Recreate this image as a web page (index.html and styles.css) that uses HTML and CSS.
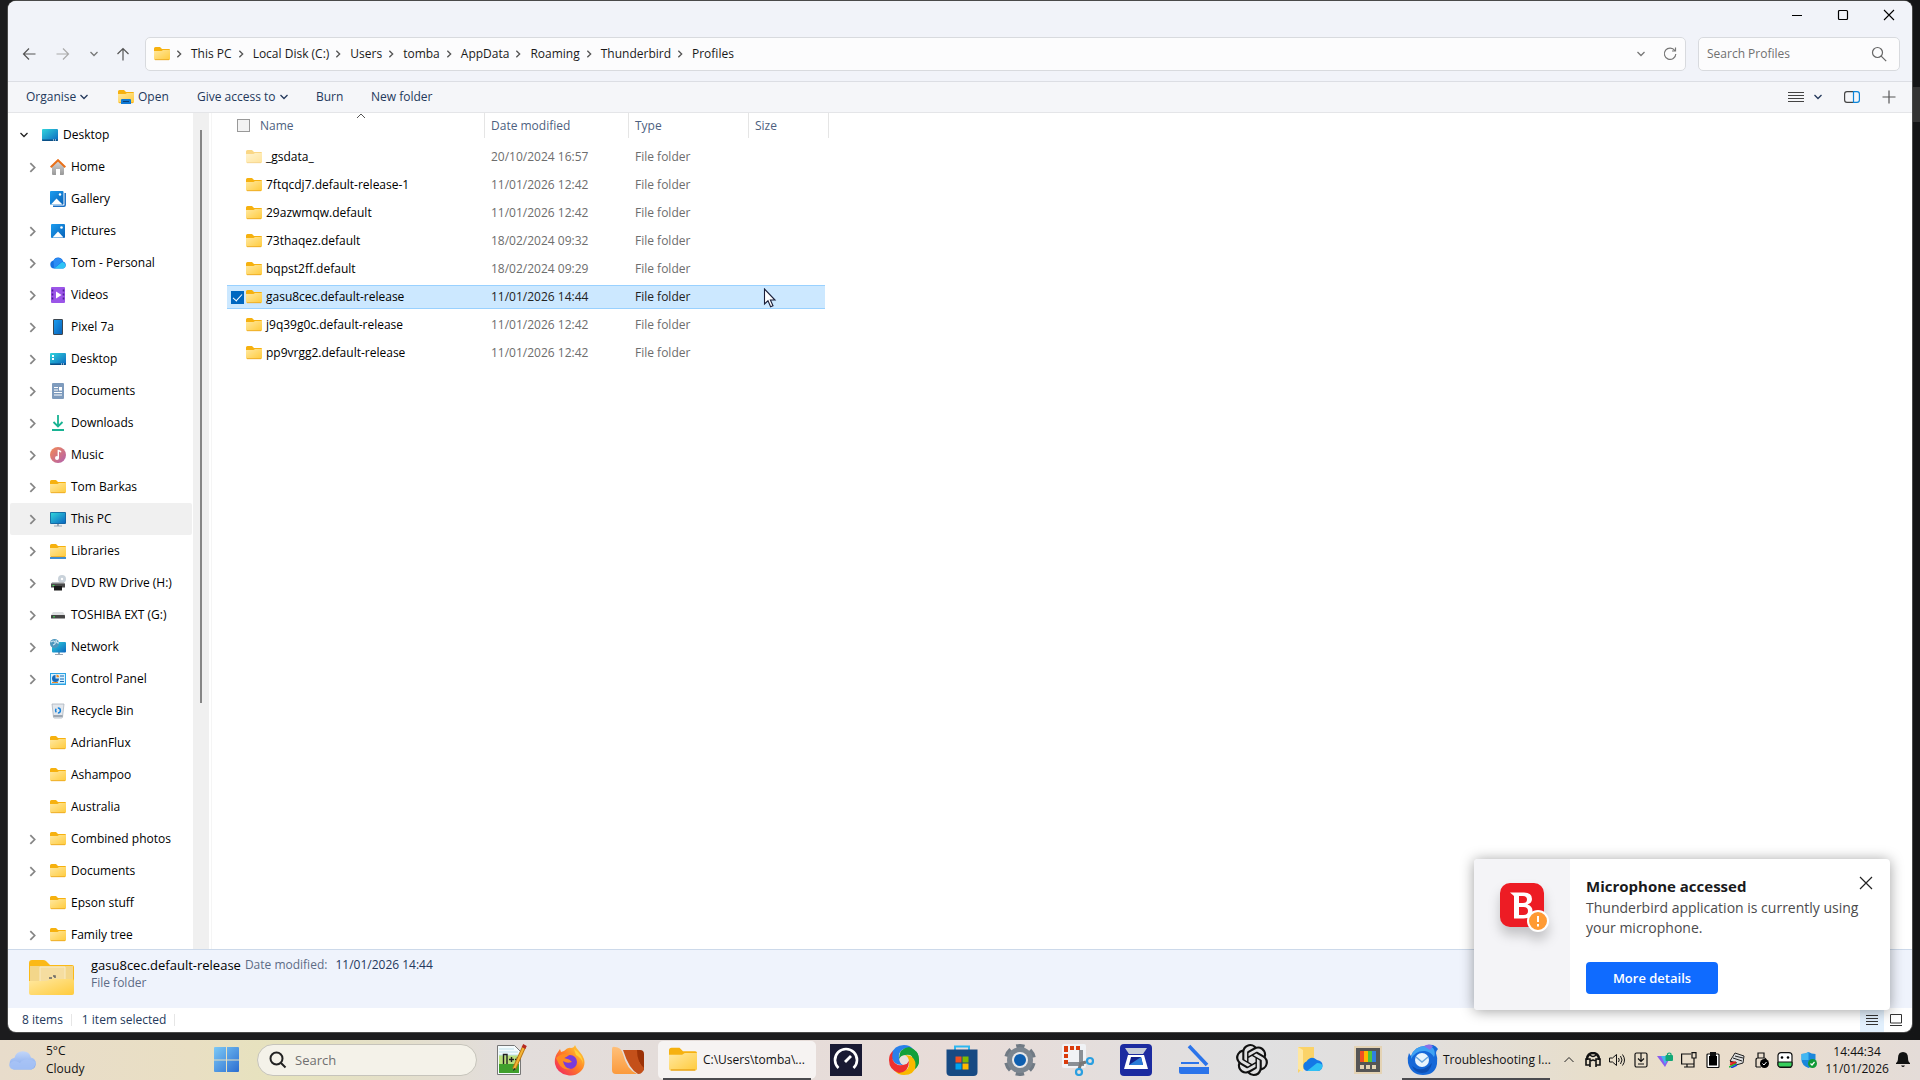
FILE: index.html
```html
<!DOCTYPE html>
<html lang="en-GB">
<head>
<meta charset="utf-8">
<meta name="viewport" content="width=device-width, initial-scale=1">
<title>Profiles - File Explorer</title>
<link rel="stylesheet" href="styles.css">
</head>
<body>
<svg class="defs" aria-hidden="true">
  <defs>
    <linearGradient id="gFolder" x1="0" y1="0" x2="1" y2="1"><stop offset="0" stop-color="#ffe8a0"/><stop offset="1" stop-color="#ffcb3c"/></linearGradient>
    <linearGradient id="gTeal" x1="0" y1="0" x2="1" y2="1"><stop offset="0" stop-color="#30d5dc"/><stop offset="1" stop-color="#0b66c0"/></linearGradient>
    <linearGradient id="gBlue" x1="0" y1="0" x2="1" y2="1"><stop offset="0" stop-color="#1c9df0"/><stop offset="1" stop-color="#0862b8"/></linearGradient>
    <linearGradient id="gWin" x1="0" y1="0" x2="1" y2="1"><stop offset="0" stop-color="#7cc9f6"/><stop offset="1" stop-color="#2b6dd0"/></linearGradient>
    <linearGradient id="gGrey" x1="0" y1="0" x2="0" y2="1"><stop offset="0" stop-color="#d8d8d8"/><stop offset="1" stop-color="#989898"/></linearGradient>
    <linearGradient id="gCloud" x1="0" y1="0" x2="0" y2="1"><stop offset="0" stop-color="#c3d6f8"/><stop offset="1" stop-color="#7fa6ee"/></linearGradient>
    <linearGradient id="gFire" x1="1" y1="0" x2="0" y2="1"><stop offset="0" stop-color="#ffe03a"/><stop offset=".5" stop-color="#ff7a25"/><stop offset="1" stop-color="#f0186c"/></linearGradient>
    <linearGradient id="gOrange" x1="0" y1="0" x2="0" y2="1"><stop offset="0" stop-color="#ffc07a"/><stop offset="1" stop-color="#fb9a3c"/></linearGradient>
    <linearGradient id="gMusic" x1="0" y1="0" x2="1" y2="1"><stop offset="0" stop-color="#f58a52"/><stop offset="1" stop-color="#b05fb0"/></linearGradient>
  </defs>
  <symbol id="chev-r" viewBox="0 0 8 12"><path d="M2 2l4 4-4 4" fill="none" stroke="currentColor" stroke-width="1.6"/></symbol>
  <symbol id="chev-d" viewBox="0 0 12 8"><path d="M2.500 2L6 5.500 9.500 2" fill="none" stroke="currentColor" stroke-width="1.300"/></symbol>
  <symbol id="folder" viewBox="0 0 16 16"><path d="M0 2.500Q0 1 1.500 1H6l2 2h7q1 0 1 1v4H0z" fill="#f6b10f"/><path d="M0 5h7.500L9 4h7v9q0 1-1 1H1q-1 0-1-1z" fill="url(#gFolder)"/><path d="M1 13.700h14" stroke="#e8a31a" stroke-width=".8"/></symbol>
  <symbol id="desktop" viewBox="0 0 16 16"><rect y="2" width="16" height="12" rx="1" fill="url(#gTeal)"/><path d="M0 12.500h16V13q0 1-1 1H1q-1 0-1-1z" fill="#0a4f86"/><path d="M11 13h1m1 0h1" stroke="#fff"/></symbol>
  <symbol id="desktop2" viewBox="0 0 16 16"><use href="#desktop"/><path d="M2 4h2v2H2zM2 7h2v2H2z" fill="#fff"/></symbol>
  <symbol id="home" viewBox="0 0 16 16"><path d="M2 7l6-5 6 5v8q0 1-1 1h-3v-6H6v6H3q-1 0-1-1z" fill="url(#gGrey)"/><path d="M.7 8.300L8 1.200l7.300 7.100" fill="none" stroke="#e8701a" stroke-width="2"/></symbol>
  <symbol id="gallery" viewBox="0 0 16 16"><path d="M3 15.200h11q1.200 0 1.200-1.200V2" fill="none" stroke="#1a6fc4" stroke-width="1.500"/><rect width="13.500" height="13.800" rx="1" fill="url(#gBlue)"/><path d="M1 13.500l5.500-6 6 6z" fill="#fff"/><circle cx="10" cy="3.500" r="1.200" fill="#fff"/></symbol>
  <symbol id="pictures" viewBox="0 0 16 16"><rect x="1" y="1" width="14" height="14" rx="1" fill="url(#gBlue)"/><path d="M2.500 14.500L8 8.500l5.500 6z" fill="#fff"/><circle cx="11.500" cy="4.500" r="1.300" fill="#fff"/></symbol>
  <symbol id="cloud" viewBox="0 0 16 16"><path d="M4 13.500a4 4 0 01-.5-7.900A5 5 0 0113 6.500a3.600 3.600 0 010 7z" fill="#1570e0"/><path d="M4 13.500l8-6.500a3.400 3.400 0 011.500 6.500z" fill="#2fc3f5"/><path d="M3.500 5.600A5 5 0 0112.500 6L4 13.500" fill="#2b8cf4"/></symbol>
  <symbol id="videos" viewBox="0 0 16 16"><rect x="1" y="0" width="14" height="16" rx="1" fill="#9b55e8"/><path d="M2.500 2.500v12M13.500 2.500v12" stroke="#4d1f96" stroke-width="1.600" stroke-dasharray="2 2"/><path d="M6 4.500v7L11.500 8z" fill="#fff"/></symbol>
  <symbol id="phone" viewBox="0 0 16 16"><rect x="3" width="10" height="16" rx="1.200" fill="#3c4650"/><rect x="4" y="1" width="8" height="14" fill="url(#gBlue)"/></symbol>
  <symbol id="doc" viewBox="0 0 16 16"><rect x="2" width="12" height="16" rx="1" fill="#7e9bbd"/><path d="M4 4.500h4M4 7h4M4 9.500h8M4 12h8" stroke="#fff"/><rect x="9" y="4" width="3" height="3.500" fill="#fff"/></symbol>
  <symbol id="down" viewBox="0 0 16 16"><path d="M8 0v11M3.500 7L8 11.500 12.500 7M2 15h12" fill="none" stroke="#19b393" stroke-width="1.800"/></symbol>
  <symbol id="music" viewBox="0 0 16 16"><circle cx="8" cy="8" r="8" fill="url(#gMusic)"/><path d="M8.300 11V3.500q2 .2 2.700 1.800" fill="none" stroke="#fff" stroke-width="1.400"/><circle cx="7" cy="11" r="2" fill="#fff"/></symbol>
  <symbol id="pc" viewBox="0 0 16 16"><path d="M7 12h2v2.500h3V15.500H4v-1h3z" fill="#98a5b3"/><rect y="1" width="16" height="12" rx="1" fill="#14629c"/><rect x=".8" y="1.800" width="14.400" height="10.400" fill="url(#gTeal)"/></symbol>
  <symbol id="library" viewBox="0 0 16 16"><use href="#folder"/><path d="M0 15h16" stroke="#1273c8" stroke-width="1.600"/></symbol>
  <symbol id="dvd" viewBox="0 0 16 16"><circle cx="12" cy="4" r="4" fill="#c9d2da"/><circle cx="12" cy="4" r="1.200" fill="#fff"/><path d="M2 7h12l1 3H1z" fill="#b9bcc0"/><rect x="1" y="8.500" width="14" height="4" fill="#4a4a4a"/><rect x="4" y="11" width="8" height="4.500" fill="#1a1a1a"/><path d="M2.500 10.500h2" stroke="#3ce052"/></symbol>
  <symbol id="drive" viewBox="0 0 16 16"><path d="M3 5h10l2 3H1z" fill="#dcdee0"/><rect x="1" y="8" width="14" height="3.500" rx=".5" fill="#444"/><path d="M3 9.800h2" stroke="#3ce052"/></symbol>
  <symbol id="network" viewBox="0 0 16 16"><path d="M8 13h2v2h3v1H5v-1h3z" fill="#98a5b3"/><rect x="2" y="3" width="14" height="10.500" rx="1" fill="url(#gTeal)"/><circle cx="4.500" cy="4.500" r="4.500" fill="#4e97bd"/><path d="M1 3q3-2 4 0t-2 3M6 1q0 3 3 3" fill="none" stroke="#cfe6f2" stroke-width="1.200"/></symbol>
  <symbol id="control" viewBox="0 0 16 16"><rect y="2" width="16" height="12" fill="#2ba3e4"/><rect x="1" y="3" width="14" height="9.500" fill="#d6f1fd"/><path d="M5.500 4v3.500H9A3.500 3.500 0 115.500 4z" fill="#1769b8"/><path d="M6.500 3.500a3 3 0 012.800 2.700H6.500z" fill="#f08a24"/><path d="M10 5h4M10 8h4M10 10.500h4" stroke="#1769b8"/><path d="M2 11.500h6" stroke="#f08a24"/></symbol>
  <symbol id="bin" viewBox="0 0 16 16"><path d="M2 1h12l-1.500 13q-.1 1-1 1h-7q-.9 0-1-1z" fill="#e3e7ec" stroke="#aab3bd" stroke-width=".8"/><path d="M3.500 13h9" stroke="#8d98a4" stroke-width="1.600"/><circle cx="8" cy="7.500" r="2.400" fill="none" stroke="#1783dc" stroke-width="1.500" stroke-dasharray="3.500 1.500"/></symbol>
  <symbol id="bird" viewBox="0 0 32 32"><path d="M2 9q1 2 2 3Q8 2 18 2q3-2 8-1 3 1 5 4-2 2-2 4 2 5 1 11-2 11-14 11T1 19q-1-5 1-10z" fill="#1668d8"/><path d="M4 12Q8 2 18 2q5-1 8 2 3 4 1 9-3-5-9-6Q9 6 4 15z" fill="#3fa2f3"/><path d="M17 2q5-3 9 0l-3 4z" fill="#8b6fe8"/><ellipse cx="15" cy="16" rx="7" ry="7" fill="#e8f4fd"/><path d="M9 13l6 5 6-5" fill="none" stroke="#6aa5dc" stroke-width="1.500"/><path d="M5 22q10 8 20-3-2 10-10 10-7 0-10-7z" fill="#0d4fb4"/></symbol>
</svg>

<div class="screen">
  <main class="window">
    <header class="titlebar">
      <button class="win-btn" aria-label="Minimise"><svg width="12" height="12"><path d="M1 6.500h10" stroke="#000"/></svg></button>
      <button class="win-btn" aria-label="Maximise"><svg width="12" height="12"><rect x="1.500" y="1.500" width="9" height="9" rx="1" fill="none" stroke="#000" stroke-width="1.200"/></svg></button>
      <button class="win-btn" aria-label="Close"><svg width="12" height="12"><path d="M1 1l10 10M11 1L1 11" stroke="#000" stroke-width="1.100"/></svg></button>
    </header>

    <div class="navbar">
      <div class="nav-btns">
        <button aria-label="Back"><svg width="14" height="14"><path d="M13.500 7H1.500M7 1.500L1.500 7 7 12.500" fill="none" stroke="#555" stroke-width="1.200"/></svg></button>
        <button class="forward" aria-label="Forward"><svg width="14" height="14"><path d="M.5 7h12M7 1.500L12.500 7 7 12.500" fill="none" stroke="#aaa" stroke-width="1.200"/></svg></button>
        <button class="recent" aria-label="Recent locations"><svg width="12" height="8"><use href="#chev-d"/></svg></button>
        <button aria-label="Up"><svg width="14" height="14"><path d="M7 13.500V1.500M1.500 7L7 1.500 12.500 7" fill="none" stroke="#555" stroke-width="1.200"/></svg></button>
      </div>
      <nav class="address" aria-label="Address">
        <svg width="16" height="16"><use href="#folder"/></svg>
        <ol class="crumbs">
          <li><svg width="8" height="10"><use href="#chev-r"/></svg><a href="#">This PC</a></li>
          <li><svg width="8" height="10"><use href="#chev-r"/></svg><a href="#">Local Disk (C:)</a></li>
          <li><svg width="8" height="10"><use href="#chev-r"/></svg><a href="#">Users</a></li>
          <li><svg width="8" height="10"><use href="#chev-r"/></svg><a href="#">tomba</a></li>
          <li><svg width="8" height="10"><use href="#chev-r"/></svg><a href="#">AppData</a></li>
          <li><svg width="8" height="10"><use href="#chev-r"/></svg><a href="#">Roaming</a></li>
          <li><svg width="8" height="10"><use href="#chev-r"/></svg><a href="#">Thunderbird</a></li>
          <li><svg width="8" height="10"><use href="#chev-r"/></svg><a href="#">Profiles</a></li>
        </ol>
        <button class="addr-btn" aria-label="Previous locations"><svg width="12" height="8"><use href="#chev-d"/></svg></button>
        <button class="addr-btn" aria-label="Refresh"><svg width="14" height="14" fill="none" stroke="#777" stroke-width="1.200"><path d="M11.800 3.500A5.700 5.700 0 1012.800 7M12.500.5v3.500H9"/></svg></button>
      </nav>
      <label class="search">
        <input type="search" placeholder="Search Profiles" aria-label="Search Profiles">
        <svg width="16" height="16" fill="none" stroke="#666" stroke-width="1.200"><circle cx="6.500" cy="6.500" r="5"/><path d="M10.200 10.200l5 5"/></svg>
      </label>
    </div>

    <div class="toolbar">
      <button class="t-organise">Organise <svg width="12" height="8"><use href="#chev-d"/></svg></button>
      <button class="t-open"><svg width="16" height="16"><use href="#folder"/><path d="M3 15v-4q0-1 1-1h8q1 0 1 1v4z" fill="#0f78d4"/><path d="M5 12.500h6" stroke="#083e78"/></svg>Open</button>
      <button class="t-access">Give access to <svg width="12" height="8"><use href="#chev-d"/></svg></button>
      <button class="t-burn">Burn</button>
      <button>New folder</button>
      <div class="tool-right">
        <button aria-label="Change view"><svg width="16" height="12"><path d="M0 1.500h16M0 4.500h16M0 7.500h16M0 10.500h16" stroke="#444"/></svg></button>
        <button class="more-view" aria-label="More view options"><svg width="12" height="8"><use href="#chev-d"/></svg></button>
        <button class="pane-btn" aria-label="Preview pane"><svg width="16" height="12" fill="none" stroke-width="1.200"><path d="M9.500.6H3Q.6.600.6 3v6Q.6 11.400 3 11.400h6.500" stroke="#444"/><path d="M9.500.6H13q2.400 0 2.400 2.400v6q0 2.400-2.400 2.400H9.500z" stroke="#0b84d8"/></svg></button>
        <button aria-label="Add"><svg width="14" height="14"><path d="M7 .5v13M.5 7h13" stroke="#555" stroke-width="1.200"/></svg></button>
      </div>
    </div>

    <div class="content">
      <aside class="sidebar">
        <ul class="tree">
          <li class="root"><svg class="tw" width="12" height="8"><use href="#chev-d"/></svg><svg class="ic"><use href="#desktop"/></svg><span>Desktop</span></li>
          <li><svg class="tw"><use href="#chev-r"/></svg><svg class="ic"><use href="#home"/></svg><span>Home</span></li>
          <li><i class="tw"></i><svg class="ic"><use href="#gallery"/></svg><span>Gallery</span></li>
          <li><svg class="tw"><use href="#chev-r"/></svg><svg class="ic"><use href="#pictures"/></svg><span>Pictures</span></li>
          <li><svg class="tw"><use href="#chev-r"/></svg><svg class="ic"><use href="#cloud"/></svg><span>Tom - Personal</span></li>
          <li><svg class="tw"><use href="#chev-r"/></svg><svg class="ic"><use href="#videos"/></svg><span>Videos</span></li>
          <li><svg class="tw"><use href="#chev-r"/></svg><svg class="ic"><use href="#phone"/></svg><span>Pixel 7a</span></li>
          <li><svg class="tw"><use href="#chev-r"/></svg><svg class="ic"><use href="#desktop2"/></svg><span>Desktop</span></li>
          <li><svg class="tw"><use href="#chev-r"/></svg><svg class="ic"><use href="#doc"/></svg><span>Documents</span></li>
          <li><svg class="tw"><use href="#chev-r"/></svg><svg class="ic"><use href="#down"/></svg><span>Downloads</span></li>
          <li><svg class="tw"><use href="#chev-r"/></svg><svg class="ic"><use href="#music"/></svg><span>Music</span></li>
          <li><svg class="tw"><use href="#chev-r"/></svg><svg class="ic"><use href="#folder"/></svg><span>Tom Barkas</span></li>
          <li class="current"><svg class="tw"><use href="#chev-r"/></svg><svg class="ic"><use href="#pc"/></svg><span>This PC</span></li>
          <li><svg class="tw"><use href="#chev-r"/></svg><svg class="ic"><use href="#library"/></svg><span>Libraries</span></li>
          <li><svg class="tw"><use href="#chev-r"/></svg><svg class="ic"><use href="#dvd"/></svg><span>DVD RW Drive (H:)</span></li>
          <li><svg class="tw"><use href="#chev-r"/></svg><svg class="ic"><use href="#drive"/></svg><span>TOSHIBA EXT (G:)</span></li>
          <li><svg class="tw"><use href="#chev-r"/></svg><svg class="ic"><use href="#network"/></svg><span>Network</span></li>
          <li><svg class="tw"><use href="#chev-r"/></svg><svg class="ic"><use href="#control"/></svg><span>Control Panel</span></li>
          <li><i class="tw"></i><svg class="ic"><use href="#bin"/></svg><span>Recycle Bin</span></li>
          <li><i class="tw"></i><svg class="ic"><use href="#folder"/></svg><span>AdrianFlux</span></li>
          <li><i class="tw"></i><svg class="ic"><use href="#folder"/></svg><span>Ashampoo</span></li>
          <li><i class="tw"></i><svg class="ic"><use href="#folder"/></svg><span>Australia</span></li>
          <li><svg class="tw"><use href="#chev-r"/></svg><svg class="ic"><use href="#folder"/></svg><span>Combined photos</span></li>
          <li><svg class="tw"><use href="#chev-r"/></svg><svg class="ic"><use href="#folder"/></svg><span>Documents</span></li>
          <li><i class="tw"></i><svg class="ic"><use href="#folder"/></svg><span>Epson stuff</span></li>
          <li><svg class="tw"><use href="#chev-r"/></svg><svg class="ic"><use href="#folder"/></svg><span>Family tree</span></li>
        </ul>
        <div class="scrollbar"><div class="thumb"></div></div>
      </aside>

      <section class="files">
        <table>
          <colgroup><col class="c-name"><col class="c-date"><col class="c-type"><col class="c-size"></colgroup>
          <thead>
            <tr>
              <th class="th-name"><div><input type="checkbox" aria-label="Select all"><span>Name</span><svg class="sort" width="10" height="6"><path d="M1 5l4-4 4 4" fill="none" stroke="#555"/></svg></div></th>
              <th><div>Date modified</div></th><th><div>Type</div></th><th><div>Size</div></th>
            </tr>
          </thead>
          <tbody>
            <tr class="hidden-item"><td><div class="fname"><svg class="ic"><use href="#folder"/></svg>_gsdata_</div></td><td>20/10/2024 16:57</td><td>File folder</td><td></td></tr>
            <tr><td><div class="fname"><svg class="ic"><use href="#folder"/></svg>7ftqcdj7.default-release-1</div></td><td>11/01/2026 12:42</td><td>File folder</td><td></td></tr>
            <tr><td><div class="fname"><svg class="ic"><use href="#folder"/></svg>29azwmqw.default</div></td><td>11/01/2026 12:42</td><td>File folder</td><td></td></tr>
            <tr><td><div class="fname"><svg class="ic"><use href="#folder"/></svg>73thaqez.default</div></td><td>18/02/2024 09:32</td><td>File folder</td><td></td></tr>
            <tr><td><div class="fname"><svg class="ic"><use href="#folder"/></svg>bqpst2ff.default</div></td><td>18/02/2024 09:29</td><td>File folder</td><td></td></tr>
            <tr class="selected"><td><div class="fname"><input type="checkbox" checked aria-label="gasu8cec.default-release"><svg class="ic"><use href="#folder"/></svg>gasu8cec.default-release</div></td><td>11/01/2026 14:44</td><td>File folder</td><td></td></tr>
            <tr><td><div class="fname"><svg class="ic"><use href="#folder"/></svg>j9q39g0c.default-release</div></td><td>11/01/2026 12:42</td><td>File folder</td><td></td></tr>
            <tr><td><div class="fname"><svg class="ic"><use href="#folder"/></svg>pp9vrgg2.default-release</div></td><td>11/01/2026 12:42</td><td>File folder</td><td></td></tr>
          </tbody>
        </table>
        <svg class="cursor" width="14" height="20"><path d="M1.500 1v15l3.500-3.200 2.600 6 2.400-1-2.600-5.800H12z" fill="#fff" stroke="#1b1f3a" stroke-width="1.100"/></svg>
      </section>
    </div>

    <section class="details">
      <svg width="45" height="36" viewBox="0 0 45 36"><path d="M0 3q0-3 3-3h11q2 0 3 1l4 4h22q2 0 2 2v14H0z" fill="#fbb917"/><rect x="1" y="6" width="43" height="20" fill="#f3d68a"/><path d="M11 7h25v15H11z" fill="#f5dda0" stroke="#f9ebc4"/><path d="M20 18h3m1-2h2v2" fill="none" stroke="#666" stroke-width="1.500"/><path d="M0 21h16q3 0 6-2h21q2 0 2 2v12q0 2-2 2H2q-2 0-2-2z" fill="url(#gFolder)"/></svg>
      <div class="d-text">
        <div class="d-line"><strong>gasu8cec.default-release</strong><span>Date modified:</span><em>11/01/2026 14:44</em></div>
        <div>File folder</div>
      </div>
    </section>

    <footer class="status">
      <span>8 items</span><span>1 item selected</span>
      <div class="views">
        <button class="on" aria-label="Details view"><svg width="12" height="12"><path d="M0 1.500h12M0 4.500h12M0 7.500h12M0 10.500h12" stroke="#333"/></svg></button>
        <button aria-label="Large icons view"><svg width="12" height="12"><path d="M.5.5h11v8.500H.5zM0 11.500h12" fill="none" stroke="#333"/></svg></button>
      </div>
    </footer>
  </main>

  <footer class="taskbar">
    <button class="weather"><svg width="30" height="20"><path d="M6 19.500a6 6 0 01.5-11.700A8.500 8.500 0 0123 7.500a6.200 6.200 0 01.5 12z" fill="url(#gCloud)"/><path d="M1 15q4-7 11-2 5-7 16-1-2 8-6 7.500H6q-4 0-5-4.500z" fill="#a9c4f6" opacity=".8"/></svg><span>5°C<br>Cloudy</span></button>
    <button class="start" aria-label="Start"><svg width="26" height="26"><path d="M0 1q0-1 1-1h11v12.500H0zM13 0h11q1 0 1 1v11.500H13zM0 13.500h12V25H1q-1 0-1-1zM13 13.500h12V24q0 1-1 1H13z" fill="url(#gWin)"/></svg></button>
    <label class="tb-search"><svg width="18" height="18" fill="none" stroke="#222" stroke-width="2"><circle cx="7.500" cy="7.500" r="6"/><path d="M12 12l4.500 4.500"/></svg><input type="search" placeholder="Search" aria-label="Search"></label>
    <div class="apps">
      <button aria-label="Notepad++"><svg width="32" height="32"><path d="M1.500 1.500h17l6 6v23h-23z" fill="#f4fbfd" stroke="#777"/><path d="M3 11h20v18H3z" fill="#b9e07c"/><path d="M3 20h20v9H3z" fill="#3f9f2c"/><path d="M3 5h15M3 8h19M3 11h19" stroke="#bfe0ea"/><path d="M7.500 20V10.500H11V20M13 15.500h5M15.500 13v5M19 15.500h5M21.500 13v5" fill="none" stroke="#222" stroke-width="1.400"/><path d="M28 3L18 25" stroke="#b87410" stroke-width="4"/><path d="M28 3L18 25" stroke="#f4b436" stroke-width="2"/><path d="M27.500 4l1.500-3" stroke="#b52a22" stroke-width="4"/><path d="M17 27l3-2-2-1z" fill="#222"/></svg></button>
      <button aria-label="Firefox"><svg width="32" height="32"><path d="M21 1q1 3 4 6t5 8q2 8-4 13t-13 3Q3 29 1 20q-1-7 3-12l2-3 1 3 3-1q4-4 7-3 3 0 4-3z" fill="url(#gFire)"/><circle cx="16" cy="18" r="7" fill="#7a3bdb"/><path d="M2 14Q8 8 15 11q-2 2-5 3 6 1 8 4-5 2-9-1 1 7 8 8-8 2-12-5z" fill="#ff8a22"/><path d="M20 5q9 6 9 15-1-6-7-9z" fill="#ffd23a"/></svg></button>
      <button aria-label="Files"><svg width="32" height="32"><path d="M10 6h18q4 0 4 4v17L20 6z" fill="#9c3206"/><path d="M11 6h14q0 12 7 18-1 6-6 6-9-5-15-24z" fill="#c4501a"/><path d="M0 5q0-3 3-2 6 0 8 7 4 16 14 20H4q-4 0-4-4z" fill="url(#gOrange)"/></svg></button>
      <button class="task active"><svg width="28" height="28" viewBox="0 1 16 14"><use href="#folder" width="16" height="16"/></svg><span>C:\Users\tomba\...</span></button>
      <button aria-label="Speedtest"><svg width="32" height="32"><rect width="32" height="32" fill="#191a33"/><path d="M8.500 24a11 11 0 1115 0" fill="none" stroke="#fff" stroke-width="2.600"/><path d="M15 18l6-6" stroke="#fff" stroke-width="2.800"/></svg></button>
      <button aria-label="ShareX"><svg width="32" height="32"><path d="M3 11Q6 1 16 1q6 0 9 4-11-3-14 5-1 7 4 11Q4 21 3 11z" fill="#2a80ea"/><path d="M21 3q10 3 10 13 0 6-4 9 3-11-5-14-7-1-11 4Q11 4 21 3z" fill="#12a03a"/><path d="M29 21q-3 10-13 10-6 0-9-4 11 3 14-5 1-7-4-11 11 0 12 10z" fill="#f9b800"/><path d="M11 29Q1 26 1 16q0-6 4-9-3 11 5 14 7 1 11-4 0 11-10 12z" fill="#ee3030"/><path d="M22 4q9 3 9 12 0 6-4 9 2-8-3-12z" fill="#12a03a"/><circle cx="16" cy="16" r="4.500" fill="#e6e0de"/></svg></button>
      <button aria-label="Microsoft Store"><svg width="32" height="32"><path d="M9 8V2.500h14V8" fill="none" stroke="#2cb6f0" stroke-width="2"/><path d="M.5 5.500h31V28q0 4-4 4h-23q-4 0-4-4z" fill="#174a83"/><path d="M9.500 12.500h6v6h-6z" fill="#f25022"/><path d="M16.500 12.500h6v6h-6z" fill="#7fba00"/><path d="M9.500 19.500h6v6h-6z" fill="#00a4ef"/><path d="M16.500 19.500h6v6h-6z" fill="#ffb900"/></svg></button>
      <button aria-label="Settings"><svg width="32" height="32"><circle cx="16" cy="16" r="13.500" fill="none" stroke="#707a84" stroke-width="5" stroke-dasharray="8 6.140" transform="rotate(13 16 16)"/><circle cx="16" cy="16" r="9.500" fill="none" stroke="#7b858f" stroke-width="7"/><circle cx="16" cy="16" r="8" fill="#e8e8ea"/><circle cx="16" cy="16" r="6" fill="#0e5fb0"/></svg></button>
      <button aria-label="Snipping Tool"><svg width="32" height="32"><rect width="24" height="24" rx="2" fill="#f0f2f5"/><path d="M2 4h18M4 4v16" fill="none" stroke="#da3b0a" stroke-width="4" stroke-dasharray="4 2"/><path d="M19 6v13M6 20h16" stroke="#8a8f95" stroke-width="4"/><path d="M17 20l7-2M19 19l-2 6" stroke="#777" stroke-width="3"/><circle cx="28" cy="17" r="3" fill="none" stroke="#2a9fe0" stroke-width="2.200"/><circle cx="17" cy="28" r="3" fill="none" stroke="#2a9fe0" stroke-width="2.200"/></svg></button>
      <button aria-label="Scan utility"><svg width="32" height="32"><rect width="32" height="32" rx="4" fill="#1c2ba0"/><path d="M5 4h22l-4 6H9z" fill="#c7cdd8"/><path d="M8 11h16l4 14H4z" fill="#fff"/><path d="M11 13h10l2 8H9z" fill="#12218c"/><path d="M9 21l12-8 2 8z" fill="#2b7cd8"/></svg></button>
      <button aria-label="Scan"><svg width="32" height="32"><path d="M11 2l18 19" stroke="#2b74ea" stroke-width="3.600"/><path d="M3 19h18" stroke="#2b74ea" stroke-width="2"/><path d="M1 23h30v7H3q-2 0-2-2z" fill="#2b74ea"/></svg></button>
      <button aria-label="ChatGPT"><svg width="32" height="32" viewBox="0 0 24 24"><path fill="#111" d="M22.280 9.820a5.980 5.980 0 0 0-.52-4.910 6.050 6.050 0 0 0-6.510-2.900A6.070 6.070 0 0 0 4.980 4.180a5.980 5.980 0 0 0-4 2.900 6.050 6.050 0 0 0 .75 7.100 5.980 5.980 0 0 0 .51 4.910 6.050 6.050 0 0 0 6.510 2.900A5.980 5.980 0 0 0 13.260 24a6.060 6.060 0 0 0 5.770-4.210 5.990 5.990 0 0 0 4-2.900 6.060 6.060 0 0 0-.75-7.070zm-9.020 12.610a4.480 4.480 0 0 1-2.880-1.040l.14-.08 4.780-2.760a.8.8 0 0 0 .39-.68v-6.740l2.020 1.170.04.05v5.580a4.500 4.500 0 0 1-4.490 4.500zM3.600 18.300a4.470 4.470 0 0 1-.54-3.010l.14.090 4.790 2.760a.77.77 0 0 0 .78 0l5.840-3.370v2.330l-.03.060-4.840 2.790A4.500 4.500 0 0 1 3.600 18.300zM2.340 7.900a4.490 4.490 0 0 1 2.370-1.980v5.680a.77.77 0 0 0 .38.680l5.820 3.350-2.020 1.170h-.07l-4.830-2.790A4.500 4.500 0 0 1 2.340 7.870zm16.600 3.860L13.100 8.360l2.020-1.160h.07l4.830 2.790a4.490 4.490 0 0 1-.68 8.100v-5.670a.79.79 0 0 0-.4-.66zm2.010-3.030l-.14-.09-4.780-2.780a.78.78 0 0 0-.78 0L9.410 9.230V6.900l.03-.06 4.830-2.790a4.500 4.500 0 0 1 6.680 4.660zM8.310 12.860L6.290 11.700l-.04-.06V6.070a4.500 4.500 0 0 1 7.370-3.450l-.14.080L8.700 5.460a.8.8 0 0 0-.39.680zm1.100-2.360l2.600-1.500 2.600 1.500v3l-2.600 1.500-2.600-1.500z"/></svg></button>
      <button aria-label="OneDrive folder"><svg width="32" height="32"><path d="M4 3h16v22H8l-4 4z" fill="#fbd368"/><path d="M4 3l5 3v22l-5-3z" fill="#ffe79f"/><path d="M13 27a5 5 0 01-.5-9.500Q17 11 23 16q6 1 5.500 6-.5 5-5.500 5z" fill="#1478e6"/><path d="M13 27l10-8q5 0 5.500 3-.5 5-5.500 5z" fill="#2fc0f4"/></svg></button>
      <button aria-label="PowerToys"><svg width="32" height="32"><rect x="2" y="2" width="28" height="28" fill="#e4d3b4"/><rect x="4" y="4" width="24" height="24" fill="#555"/><path d="M8 7h4v11H8z" fill="#f25022"/><path d="M12 7h4v11h-4z" fill="#ffb900"/><path d="M16 7h4v11h-4z" fill="#4fc63d"/><path d="M20 7h4v11h-4z" fill="#2f7fe0"/><path d="M8 21h4v4H8zM14 21h4v4h-4zM20 21h4v4h-4z" fill="#e4d3b4"/></svg></button>
      <button class="task bird"><svg width="32" height="32"><use href="#bird"/></svg><span>Troubleshooting I...</span></button>
    </div>
    <div class="tray">
      <button aria-label="Show hidden icons"><svg width="16" height="16"><path d="M3.500 10L8 5.500l4.500 4.500" fill="none" stroke="#222"/></svg></button>
      <button aria-label="Headset"><svg width="16" height="16"><path d="M2 8V7a6 6 0 0112 0v1" fill="none" stroke="#111" stroke-width="2.500"/><path d="M5 3q3 3 6 0M1 7h4v6H1zM11 7h4v6h-4zM6 9q2-2 4 0M5 13v2M11 13v2" fill="none" stroke="#111" stroke-width="1.600"/></svg></button>
      <button aria-label="Volume"><svg width="16" height="16" fill="none" stroke="#111"><path d="M.5 6h3l4-3.500v11l-4-3.500h-3zM9.500 6q1.500 2 0 4M11.500 4q3 4 0 8M13.500 2.500q4 5.500 0 11"/></svg></button>
      <button aria-label="Updates"><svg width="16" height="16" fill="none" stroke="#111" stroke-width="1.200"><rect x="2" y="1" width="12" height="14" rx="1.500"/><path d="M8 1v8M5 6.500L8 9.500l3-3M5 12h6"/></svg></button>
      <button aria-label="VPN"><svg width="16" height="16"><path d="M0 4h14L8 15z" fill="#8a5cf0"/><path d="M4 4h9l-5 8z" fill="#44b7e8"/><rect x="8.500" y="3" width="7.500" height="6" rx="1" fill="#12a877"/><path d="M10.500 3.500V2q1.800-2 3.500 0v1.500" fill="none" stroke="#12a877" stroke-width="1.200"/></svg></button>
      <button aria-label="Network"><svg width="16" height="16" fill="none" stroke="#111" stroke-width="1.200"><path d="M10 2H.6v10H13V7M6 12v3M3 15h7M11 .6h4V6h-4zM13 6v9h-3"/></svg></button>
      <button aria-label="Clipboard"><svg width="16" height="16"><rect x="2" y="2" width="12" height="13.500" rx="1" fill="#fff" stroke="#111" stroke-width="1.200"/><rect x="4" y="4" width="8" height="9.500" fill="#000"/><rect x="5" y="0" width="6" height="4" fill="#111"/></svg></button>
      <button aria-label="Printer"><svg width="16" height="16"><path d="M1 9l5-8 9 3-1 7-7 2z" fill="#ddd" stroke="#222"/><path d="M4 6l9 3M6 4l8 2M1 9l7 2" stroke="#222"/><path d="M1 11l6-1M1 13l6-2" stroke="#e02020" stroke-width="1.500"/><path d="M0 15l7-3" stroke="#18b838" stroke-width="1.500"/><path d="M2 16l6-3" stroke="#1a3de0" stroke-width="1.500"/></svg></button>
      <button aria-label="Safely remove hardware"><svg width="16" height="16"><path d="M5 6V1h6v5M3 15V8q0-2 2-2h6q2 0 2 2" fill="none" stroke="#111" stroke-width="1.200"/><path d="M3 15h5" stroke="#111"/><circle cx="11.500" cy="11.500" r="4.500" fill="#000"/><path d="M9.500 11.500l1.500 1.500 2.500-3" fill="none" stroke="#fff"/></svg></button>
      <button aria-label="Password manager"><svg width="16" height="16"><rect x="1" y=".6" width="14" height="14.800" rx="3" fill="#fff" stroke="#111" stroke-width="1.200"/><circle cx="5" cy="5.500" r="1.300"/><circle cx="11" cy="5.500" r="1.300"/><path d="M1 10h14v3q0 2-2 2H3q-2 0-2-2z" fill="#37cf5c" stroke="#111"/></svg></button>
      <button aria-label="Windows Security"><svg width="16" height="16"><path d="M7.500 0q3 2 7 2v6q0 5-7 8-7-3-7-8V2q4 0 7-2z" fill="#1b87dc"/><path d="M7.500 0v8H.5V2q4 0 7-2z" fill="#42b7f2"/><circle cx="11.500" cy="11.500" r="4.500" fill="#119a37"/><path d="M9.500 11.500l1.500 1.500 2.500-3" fill="none" stroke="#fff" stroke-width="1.200"/></svg></button>
    </div>
    <button class="clock">14:44:34<br>11/01/2026</button>
    <button class="bell" aria-label="Notifications"><svg width="16" height="18"><path d="M8 1q5 0 5 6 0 4 2 5v1H1v-1q2-1 2-5 0-6 5-6zM6 14.500h4q-2 3-4 0z" fill="#111"/></svg></button>
  </footer>

  <aside class="toast" role="alert">
    <div class="toast-side"><svg width="52" height="68"><rect x="2" width="44" height="44" rx="10" fill="#ed1c24"/><path d="M12 9.500h14q8 0 8 6.500 0 4-4.500 5.500 5 1.500 5 6.500 0 7.500-9 7.500H16V13zM21 13v7h4q4 0 4-3.500T25 13zM21 24v8h4.500q4.500 0 4.500-4t-4.500-4z" fill="#fff" fill-rule="evenodd"/><circle cx="40" cy="38" r="10" fill="#ff9a33" stroke="#fff" stroke-width="2"/><path d="M40 33v6M40 41v2.500" stroke="#fff" stroke-width="2"/></svg></div>
    <div class="toast-body">
      <h2>Microphone accessed</h2>
      <p>Thunderbird application is currently using your microphone.</p>
      <button class="more">More details</button>
    </div>
    <button class="toast-close" aria-label="Close notification"><svg width="14" height="14"><path d="M1 1l12 12M13 1L1 13" stroke="#222" stroke-width="1.200"/></svg></button>
  </aside>
</div>
</body>
</html>
```
FILE: styles.css
```css
* { box-sizing: border-box; }

body {
  margin: 0;
  font: 12px/16px "Open Sans", "Noto Sans", sans-serif;
  color: #000;
  background: #1c1c1e;
}

button {
  font: inherit;
  color: inherit;
  background: none;
  border: 0;
  padding: 0;
  display: flex;
  align-items: center;
  justify-content: center;
}

svg { display: block; flex: none; }
a { color: inherit; text-decoration: none; }
ul, ol { list-style: none; margin: 0; padding: 0; }
.defs { position: absolute; width: 0; height: 0; }

input[type="search"] {
  font: inherit;
  color: #333;
  background: none;
  border: 0;
  padding: 0;
  outline: 0;
  flex: 1;
  min-width: 0;
}
input::placeholder { color: #707070; opacity: 1; }

.screen {
  height: 100vh;
  display: flex;
  flex-direction: column;
  position: relative;
  background:
    linear-gradient(#343434, #343434) right 87px / 8px 35px no-repeat,
    linear-gradient(90deg, #1c1c1e 50%, #141516);
}

/* Explorer window */
.window {
  flex: 1;
  min-height: 0;
  margin: 1px 8px 8px;
  display: flex;
  flex-direction: column;
  background: #fff;
  border-radius: 8px;
  overflow: hidden;
  box-shadow: 0 0 0 1px #4a4a4a;
}

.titlebar {
  flex: none;
  display: flex;
  justify-content: flex-end;
  height: 28px;
  background: #f1f3f9;
}
.win-btn { width: 46px; }

.navbar {
  flex: none;
  display: flex;
  gap: 12px;
  padding: 8px 12px 10px 0;
  background: #f1f3f9;
  border-bottom: 1px solid #dcdee4;
}
.nav-btns { display: flex; align-items: center; gap: 16px; padding-left: 14px; width: 125px; }
.nav-btns .forward { margin: 0 2px 0 4px; }
.nav-btns .recent { color: #777; }

.address, .search {
  display: flex;
  align-items: center;
  height: 34px;
  background: #fcfcfd;
  border: 1px solid #d8dade;
  border-radius: 5px;
}
.address { flex: 1; padding: 0 8px; color: #1a1a1a; }
.crumbs { display: flex; flex: 1; padding-left: 5px; }
.crumbs li { display: flex; align-items: center; padding-right: 5px; }
.crumbs svg { margin-right: 8px; color: #555; }
.addr-btn { color: #777; margin-left: 16px; }
.search { width: 202px; padding: 0 12px 0 8px; }

.toolbar {
  flex: none;
  display: flex;
  align-items: center;
  height: 31px;
  padding: 0 16px 0 18px;
  color: #24395c;
  background: #f5f6f9;
  border-bottom: 1px solid #e4e5e8;
}
.toolbar button { gap: 2px; justify-content: flex-start; white-space: nowrap; }
.toolbar .t-organise { width: 92px; }
.toolbar .t-open { width: 79px; gap: 4px; }
.toolbar .t-access { width: 119px; }
.toolbar .t-burn { width: 55px; }
.tool-right { display: flex; align-items: center; margin-left: auto; }
.more-view { margin: 0 20px 0 8px; }
.pane-btn { margin-right: 22px; }

.content { flex: 1; min-height: 0; display: flex; }

/* Navigation tree */
.sidebar {
  flex: none;
  width: 204px;
  display: flex;
  border-right: 1px solid #f5f5f5;
}
.tree { flex: 1; padding: 6px 1px 0 2px; overflow: hidden; }
.tree li {
  display: flex;
  align-items: center;
  height: 32px;
  padding-left: 18px;
  border-radius: 2px;
  white-space: nowrap;
}
.tree .root { padding-left: 8px; }
.tree .current { background: #f0f0f0; }
.tw { flex: none; width: 9px; height: 13px; color: #858585; margin-right: 13px; }
.root .tw { width: 12px; height: 8px; color: #222; margin-right: 12px; }
.ic { width: 16px; height: 16px; margin-right: 5px; }
.scrollbar { width: 16px; margin-right: 2px; padding: 17px 7px 0; background: #f0f0f0; }
.thumb { width: 2px; height: 70%; background: #868686; }

/* File list */
.files { flex: 1; min-width: 0; padding-left: 15px; position: relative; }
table { table-layout: fixed; width: 602px; border-collapse: separate; border-spacing: 0; }
.c-name { width: 258px; }
.c-date { width: 144px; }
.c-type { width: 120px; }
.c-size { width: 80px; }
th { padding: 0 0 5px; font-weight: 400; text-align: left; color: #4d5f80; }
th div {
  position: relative;
  display: flex;
  align-items: center;
  height: 25px;
  padding-left: 6px;
  border-right: 1px solid #e5e5e5;
}
.th-name div { padding-left: 10px; gap: 10px; }
.sort { position: absolute; left: 129px; top: 0; }
input[type="checkbox"] {
  appearance: none;
  flex: none;
  width: 13px;
  height: 13px;
  margin: 0;
  border: 1px solid #999;
  background: #f3f3f3;
}
td {
  height: 28px;
  padding: 0 0 0 6px;
  color: #6d6d6d;
  border: solid transparent;
  border-width: 2px 0;
  background-clip: padding-box;
}
td:first-child { padding-left: 4px; }
td:last-child { border-right-width: 4px; }
.fname { display: flex; align-items: center; color: #000; padding-left: 15px; white-space: nowrap; }
.fname .ic { margin-right: 4px; }
.hidden-item .ic { opacity: .5; }
.selected td {
  color: #222;
  background-color: #cce8ff;
  background-image: linear-gradient(#99d1ff, #99d1ff), linear-gradient(#99d1ff, #99d1ff);
  background-size: 100% 1px;
  background-position: top, bottom;
  background-repeat: no-repeat;
}
.selected .fname { padding-left: 0; }
.selected input[type="checkbox"] {
  position: relative;
  margin-right: 2px;
  border-color: #0067c0;
  background: #0067c0;
}
.selected input::after {
  content: "";
  position: absolute;
  left: 3px;
  top: 0;
  width: 4px;
  height: 8px;
  border: solid #fff;
  border-width: 0 1px 1px 0;
  transform: rotate(42deg);
}
.cursor { position: absolute; left: 551px; top: 175px; }

/* Details and status */
.details {
  flex: none;
  display: flex;
  height: 59px;
  padding: 10px 21px 0;
  gap: 17px;
  color: #5d6b85;
  background: #eff3fc;
  border-top: 1px solid #ccd9ea;
}
.d-text { margin-top: -4px; line-height: 18px; }
.d-line { display: flex; gap: 4px; }
.d-line strong { font-weight: 400; font-size: 13px; color: #000; }
.d-line em { font-style: normal; color: #24395c; margin-left: 4px; }
.status { flex: none; display: flex; align-items: center; height: 24px; padding-left: 14px; color: #24395c; }
.status span { padding-right: 8px; margin-right: 10px; line-height: 12px; border-right: 1px solid #e6e6e6; }
.views { display: flex; height: 100%; margin-left: auto; padding-right: 4px; }
.views button { width: 24px; }
.views .on { background: #e2f0fd; }

/* Taskbar */
.taskbar {
  flex: none;
  display: flex;
  align-items: center;
  height: 40px;
  color: #111;
  background: linear-gradient(90deg, #e8dccb 0, #e9dfc3 10%, #e6e3bd 15%, #e4e0c8 20%, #e2dddb 26%, #e8dcd8 50%, #e0e0e1 65%, #e2dfdd 74%, #e8dec9 84%, #eaddcc 90%, #e4dcd8 100%);
}
.weather { width: 210px; padding-left: 8px; gap: 8px; justify-content: flex-start; text-align: left; line-height: 18px; }
.start { width: 33px; }
.tb-search {
  display: flex;
  align-items: center;
  gap: 8px;
  width: 220px;
  height: 32px;
  margin: 0 6px 0 14px;
  padding: 0 11px;
  font-size: 13px;
  background: #f4f2e9;
  border: 1px solid #c6c4bb;
  border-radius: 16px;
}
.apps { display: flex; align-items: center; }
.apps > button { width: 58px; height: 38px; }
.apps > .task { width: 158px; gap: 6px; padding-left: 11px; justify-content: flex-start; border-radius: 5px; position: relative; white-space: nowrap; }
.apps > .active { background: #f6f3f2; margin: 0 1px; }
.apps > .bird { padding-left: 10px; gap: 4px; }
.task::after { content: ""; position: absolute; left: 5px; right: 5px; bottom: -1px; height: 2px; background: #4b4b4f; }
.tray { display: flex; margin-left: auto; gap: 8px; }
.clock { width: 58px; margin-left: 11px; line-height: 17px; }
.bell { width: 34px; }

/* Notification */
.toast {
  position: absolute;
  right: 30px;
  bottom: 70px;
  display: flex;
  width: 416px;
  min-height: 151px;
  background: #fff;
  border-radius: 4px;
  overflow: hidden;
  box-shadow: 0 1px 14px rgba(0, 0, 0, .38);
}
.toast-side { width: 96px; padding: 24px 0 0 24px; background: #f4f4f7; }
.toast-side svg { filter: drop-shadow(0 8px 6px rgba(0, 0, 0, .2)); }
.toast-body { flex: 1; padding: 16px 24px 16px 16px; color: #4b4b4d; }
.toast-body h2 { margin: 0; font-size: 15px; line-height: 23px; color: #1a1a1c; }
.toast-body p { margin: 0 0 24px; font-size: 14px; line-height: 20px; }
.more { width: 132px; height: 32px; font-size: 13px; font-weight: 600; color: #fff; background: #0f6bff; border-radius: 4px; }
.toast-close { position: absolute; right: 17px; top: 17px; }
```
